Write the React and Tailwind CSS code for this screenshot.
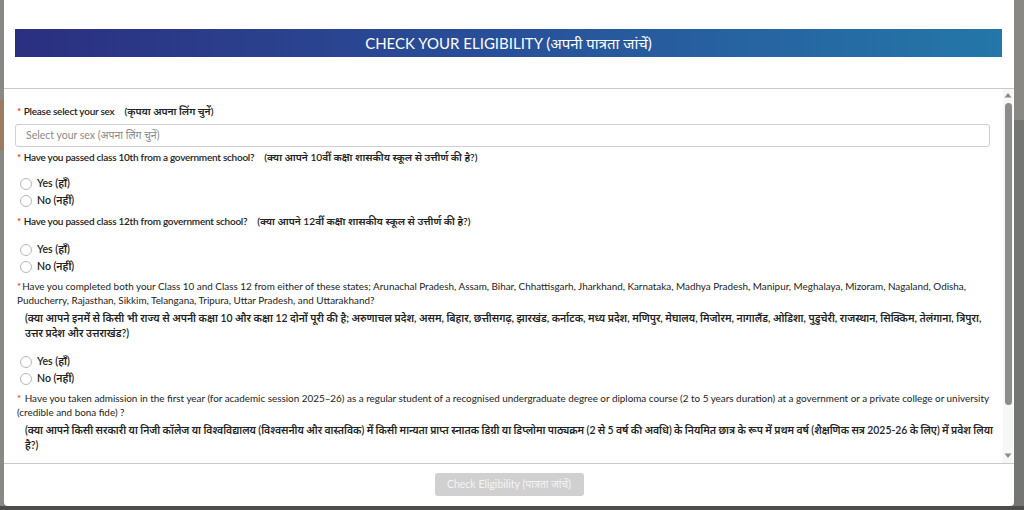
import React from "react";

const latoFont = { fontFamily: "Lato, 'Noto Sans', 'Noto Sans Devanagari', sans-serif" };

function Radio({ label }) {
  return (
    <label className="flex items-center gap-[5px] h-[17px] pl-[5px]">
      <span className="w-[12px] h-[12px] rounded-full border border-[#b8b8b8] bg-white"></span>
      <span className="text-[10.5px] font-semibold text-[#222]">{label}</span>
    </label>
  );
}

function Question({ en, hi, block = false, hiClass = "" }) {
  return (
    <div className="pl-[2px]">
      {block ? (
        <>
          <p className="text-[9.9px] leading-[14px] text-[#222]">
            <span className="text-[#e02424] pr-[1px]">*</span>
            {en}
          </p>
          <p className={`mt-[4px] pl-[8px] text-[10.4px] leading-[15px] font-semibold text-[#222] ${hiClass}`}>{hi}</p>
        </>
      ) : (
        <p className="text-[10px] leading-[14px] font-semibold text-[#222]">
          <span className="text-[#e02424]">* </span>
          <span className="tracking-[-0.25px]">{en}</span>
          <span className="ml-[10px] text-[10.2px]">{hi}</span>
        </p>
      )}
    </div>
  );
}

export default function App() {
  return (
    <div className="relative w-[1024px] h-[510px] overflow-hidden bg-[#8a8885]" style={latoFont}>
      <div className="absolute left-0 top-[100px] w-[4px] h-[50px] bg-[#9c7b60]"></div>
      <div className="absolute right-0 top-[120px] w-[10px] h-[390px] bg-[#737672]"></div>
      <div className="absolute left-0 bottom-0 w-full h-[4px] bg-[#4d4d4b]"></div>

      {/* modal */}
      <div className="relative ml-[4px] w-[1010px] h-[506px] bg-white rounded-b-[4px] flex flex-col">
        <div className="pt-[29px] pl-[11px] pr-[12px]">
          <div className="h-[28px] flex items-center justify-center bg-gradient-to-r from-[#2b2f80] via-[#28509a] to-[#2477a8]">
            <span className="text-white text-[15px]">CHECK YOUR ELIGIBILITY (अपनी पात्रता जांचें)</span>
          </div>
        </div>
        <div className="mt-[31px] border-t border-[#c9c9c9]"></div>

        {/* scroll area */}
        <div className="flex h-[374px]">
          <div className="flex-1 overflow-hidden pl-[11px] pr-[2px] pt-[15px]">
            <Question en="Please select your sex" hi="(कृपया अपना लिंग चुनें)" />
            <div className="mt-[6px] mr-[11px] h-[23px] border border-[#cfcfcf] rounded-[3px] flex items-center pl-[10px] text-[10.5px] text-[#8a8a8a]">
              Select your sex (अपना लिंग चुनें)
            </div>
            <div className="mt-[3px]">
              <Question en="Have you passed class 10th from a government school?" hi="(क्या आपने 10वीं कक्षा शासकीय स्कूल से उत्तीर्ण की है?)" />
            </div>
            <div className="mt-[11px] flex flex-col">
              <Radio label="Yes (हाँ)" />
              <Radio label="No (नहीं)" />
            </div>
            <div className="mt-[5px]">
              <Question en="Have you passed class 12th from government school?" hi="(क्या आपने 12वीं कक्षा शासकीय स्कूल से उत्तीर्ण की है?)" />
            </div>
            <div className="mt-[13px] flex flex-col">
              <Radio label="Yes (हाँ)" />
              <Radio label="No (नहीं)" />
            </div>
            <div className="mt-[4px]">
              <Question
                block
                en="Have you completed both your Class 10 and Class 12 from either of these states; Arunachal Pradesh, Assam, Bihar, Chhattisgarh, Jharkhand, Karnataka, Madhya Pradesh, Manipur, Meghalaya, Mizoram, Nagaland, Odisha, Puducherry, Rajasthan, Sikkim, Telangana, Tripura, Uttar Pradesh, and Uttarakhand?"
                hi="(क्या आपने इनमें से किसी भी राज्य से अपनी कक्षा 10 और कक्षा 12 दोनों पूरी की है; अरुणाचल प्रदेश, असम, बिहार, छत्तीसगढ़, झारखंड, कर्नाटक, मध्य प्रदेश, मणिपुर, मेघालय, मिजोरम, नागालैंड, ओडिशा, पुडुचेरी, राजस्थान, सिक्किम, तेलंगाना, त्रिपुरा, उत्तर प्रदेश और उत्तराखंड?)"
              />
            </div>
            <div className="mt-[12px] flex flex-col">
              <Radio label="Yes (हाँ)" />
              <Radio label="No (नहीं)" />
            </div>
            <div className="mt-[4px]">
              <Question
                block
                hiClass="[word-spacing:-0.2px]"
                en=" Have you taken admission in the first year (for academic session 2025–26) as a regular student of a recognised undergraduate degree or diploma course (2 to 5 years duration) at a government or a private college or university (credible and bona fide) ?"
                hi={
                  <>
                    (क्या आपने किसी सरकारी या निजी कॉलेज या विश्वविद्यालय (विश्वसनीय और वास्तविक) में किसी मान्यता प्राप्त स्नातक डिग्री या डिप्लोमा पाठ्यक्रम (2 से 5 वर्ष की अवधि) के नियमित छात्र के रूप में प्रथम वर्ष (शैक्षणिक सत्र 2025-26 के लिए) में प्रवेश लिया{" "}
                    <span className="whitespace-nowrap">है?)</span>
                  </>
                }
              />
            </div>
          </div>

          {/* scrollbar */}
          <div className="w-[10px] mr-[1px] bg-[#f7f7f7] flex flex-col items-center pt-[3px] pb-[4px]">
            <svg width="8" height="6" viewBox="0 0 8 6"><path d="M4 1L7.5 5.5H0.5Z" fill="#8a8a8a" /></svg>
            <div className="mt-[5px] w-[7px] h-[302px] rounded-full bg-[#8c8c8c]"></div>
            <div className="flex-1"></div>
            <svg width="8" height="6" viewBox="0 0 8 6"><path d="M0.5 0.5H7.5L4 5Z" fill="#8a8a8a" /></svg>
          </div>
        </div>

        <div className="border-t border-[#c9c9c9]"></div>
        <div className="flex-1 flex items-center justify-center pb-[1px]">
          <button className="w-[149px] h-[23px] rounded-[3px] bg-[#d0d0d0] text-[#f4f4f4] text-[10.5px]">
            Check Eligibility (पात्रता जांचें)
          </button>
        </div>
      </div>
    </div>
  );
}
